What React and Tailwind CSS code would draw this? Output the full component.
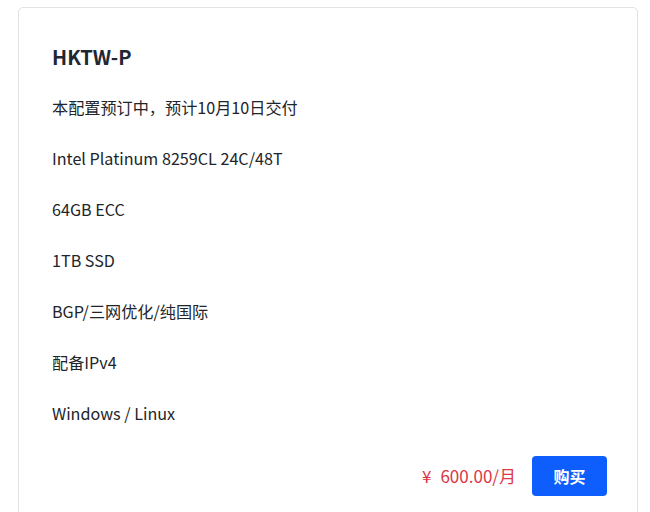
export default function App() {
  const items = [
    "本配置预订中，预计10月10日交付",
    "Intel Platinum 8259CL 24C/48T",
    "64GB ECC",
    "1TB SSD",
    "BGP/三网优化/纯国际",
    "配备IPv4",
    "Windows / Linux",
  ];
  return (
    <div
      className="w-[650px] h-[512px] overflow-hidden bg-white"
      style={{ fontFamily: '"Noto Sans CJK SC", "Noto Sans", sans-serif' }}
    >
      <div className="ml-[18px] mt-[7px] w-[620px] rounded-[5px] border border-[#e3e3e3] bg-white pl-[33px] pr-[30px] pt-[23px] pb-8">
        <div className="h-[51px] flex items-center text-[20px] font-bold text-[#1f2733]">
          HKTW-P
        </div>
        {items.map((t) => (
          <div
            key={t}
            className="h-[51px] flex items-center text-[16.15px] text-[#212529]"
          >
            {t}
          </div>
        ))}
        <div className="mt-[17px] flex items-center justify-end gap-[16px]">
          <span className="flex items-center text-[17px] text-[#dc3545]">
            <span>¥</span>
            <span className="ml-[9px]">600.00/月</span>
          </span>
          <button className="w-[75px] h-[40px] rounded-[4px] bg-[#0d5efd] text-white text-[16px] font-bold">
            购买
          </button>
        </div>
      </div>
    </div>
  );
}
